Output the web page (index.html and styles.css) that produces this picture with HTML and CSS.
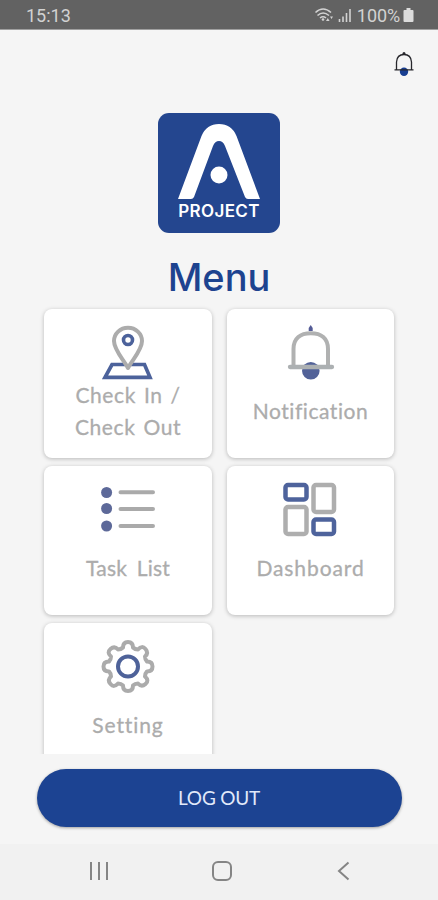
FILE: index.html
```html
<!DOCTYPE html>
<html lang="en">
<head>
<meta charset="utf-8">
<title>Menu</title>
<link rel="stylesheet" href="styles.css">
</head>
<body>
<div class="phone">
  <header class="status">
    <span class="time">15:13</span>
    <svg class="signal" width="38" height="18" viewBox="314 6 38 18">
      <g fill="none" stroke="#d2d2d2" stroke-width="1.6">
        <path d="M315.5 12.5Q323 5.5 331 12.5M317.5 15.5Q323 10.5 329 15.5M320 18Q323 15.5 326 18"/>
        <path d="M339.5 19V22M343 16.500V22M346.500 13V22M350 9V22"/>
      </g>
      <circle cx="323" cy="19.500" r="1.300" fill="#d2d2d2"/>
      <path d="M326 21l1.800-3 1.800 3zM330 16.500h3l-1.500 2.500z" fill="#d2d2d2"/>
    </svg>
    <span class="percent">100%</span>
    <svg width="12" height="16" viewBox="0 0 12 16"><path d="M3.500 1h4v2h2q1 0 1 1v10q0 1-1 1h-8q-1 0-1-1V4q0-1 1-1h2z" fill="#dcdcdc"/></svg>
  </header>
  <main>
    <div class="topbar">
      <svg width="24" height="28" viewBox="392 50 24 28">
        <circle cx="404" cy="71.800" r="4.200" fill="#183e91"/>
        <path d="M396.500 69.500V62Q397 54.500 404 54.500Q411 54.500 411.500 62V69.500M394.500 69.800H413.500" fill="none" stroke="#27272c" stroke-width="1.300"/>
        <circle cx="404" cy="53.500" r="1.500" fill="#27272c"/>
      </svg>
    </div>
    <div class="logo">
      <svg width="84" height="77" viewBox="177 123 84 77">
        <path d="M178 199L201.500 136Q206.500 124 219 124Q231.500 124 236.500 136L260 199H248Q246 199 245 197L225 146Q223 141 219 141Q215 141 213 146L194 197Q193 199 191 199Z" fill="#fff"/>
        <circle cx="219" cy="175" r="8.500" fill="#fff"/>
      </svg>
      <span>PROJECT</span>
    </div>
    <h1>Menu</h1>
    <div class="grid">
      <div class="card">
        <svg width="56" height="57" viewBox="100.500 323 56 57">
          <path d="M112.500 364.500H145L150.500 377.300H105.500Z" fill="none" stroke="#4c629b" stroke-width="3.700"/>
          <path d="M128.500 368C124 359.500 114.500 350 114.500 341A14 13.300 0 0 1 142.500 341C142.500 350 133 359.500 128.500 368Z" fill="#fff" stroke="#acacac" stroke-width="4" stroke-linejoin="round"/>
          <circle cx="128.500" cy="340" r="4.500" fill="none" stroke="#4c629b" stroke-width="3.600"/>
        </svg>
        <p class="checkin">Check In /<br>Check Out</p>
      </div>
      <div class="card">
        <svg width="56" height="57" viewBox="282.500 323 56 57">
          <path d="M308.200 331v-3l2-3 2 3v3z" fill="#535b96"/>
          <circle cx="310.300" cy="370.700" r="8.800" fill="#526298"/>
          <path d="M293 366V349C293 338 300 333.200 310.300 333.200S327.500 338 327.500 349V366" fill="none" stroke="#b0b1b1" stroke-width="4"/>
          <path d="M289.500 367H331.500" stroke="#acb0b2" stroke-width="4.300" stroke-linecap="round"/>
        </svg>
        <p class="notification">Notification</p>
      </div>
      <div class="card">
        <svg width="56" height="57" viewBox="100 480 56 57">
          <g fill="#5d6999"><circle cx="106.600" cy="492.500" r="5.500"/><circle cx="106.600" cy="508.500" r="5.500"/><circle cx="106.600" cy="526" r="5.500"/></g>
          <path d="M120.500 492.300H153M120.500 509H153M120.500 526H153" stroke="#aaa" stroke-width="4" stroke-linecap="round"/>
        </svg>
        <p class="task">Task List</p>
      </div>
      <div class="card">
        <svg width="56" height="57" viewBox="283.500 480 56 57">
          <g fill="none" stroke-width="4.500">
            <rect x="286" y="485" width="21" height="14.500" rx="2.500" stroke="#4e639c"/>
            <rect x="314" y="485" width="20.500" height="27" rx="2.500" stroke="#aeaeae"/>
            <rect x="286" y="507" width="21" height="27" rx="2.500" stroke="#aeaeae"/>
            <rect x="314" y="519.500" width="20.500" height="14.500" rx="2.500" stroke="#4e639c"/>
          </g>
        </svg>
        <p class="dashboard">Dashboard</p>
      </div>
      <div class="card">
        <svg width="56" height="57" viewBox="-28 -29.500 56 57">
          <path fill="none" stroke="#ababab" stroke-width="4" stroke-linejoin="round" d="M-5 -19Q-5 -24.500 0 -24.500T5 -19Q7 -17 10 -17Q14 -21.500 17.500 -17.500T17 -10Q17 -7 19 -5Q24.500 -5 24.500 0T19 5Q17 7 17 10Q21.500 14 17.500 17.500T10 17Q7 17 5 19Q5 24.500 0 24.500T-5 19Q-7 17 -10 17Q-14 21.500 -17.500 17.500T-17 10Q-17 7 -19 5Q-24.500 5 -24.500 0T-19 -5Q-17 -7 -17 -10Q-21.500 -14 -17.500 -17.500T-10 -17Q-7 -17 -5 -19Z"/>
          <circle r="10" fill="none" stroke="#4e6299" stroke-width="4"/>
        </svg>
        <p class="setting">Setting</p>
      </div>
    </div>
    <button class="logout">LOG OUT</button>
  </main>
  <nav class="nav">
    <svg width="20" height="20" viewBox="0 0 20 20"><path d="M2 1V19M10 1V19M18 1V19" stroke="#858585" stroke-width="2"/></svg>
    <svg width="20" height="20" viewBox="0 0 20 20"><rect x="1" y="1" width="18" height="18" rx="5" fill="none" stroke="#858585" stroke-width="2"/></svg>
    <svg width="20" height="20" viewBox="0 0 20 20"><path d="M14.500 1.500L5 10L14.500 18.500" fill="none" stroke="#858585" stroke-width="2"/></svg>
  </nav>
</div>
</body>
</html>
```
FILE: styles.css
```css
* { box-sizing: border-box; }
body { margin: 0; background: #f5f5f5; font-family: Lato, sans-serif; }
svg { display: block; flex: none; }
.phone { width: 438px; height: 900px; display: flex; flex-direction: column; overflow: hidden; }
.status { height: 30px; flex: none; display: flex; align-items: center; padding: 0 23px 0 26px; background: #626262; border-bottom: 1px solid #a0a0a0; color: #d2d2d2; font: 18px Roboto, sans-serif; }
.time { flex: 1; padding-top: 2px; }
.percent { margin: 2px 3px 0 5px; letter-spacing: -0.1px; }
main { flex: 1; min-height: 0; display: flex; flex-direction: column; align-items: center; }
.topbar { width: 100%; height: 83px; flex: none; display: flex; justify-content: flex-end; padding: 20px 22px 0 0; }
.logo { width: 122px; height: 120px; flex: none; border-radius: 11px; background: #24468f; display: flex; flex-direction: column; align-items: center; padding-top: 10px; color: #fff; }
.logo span { font: 600 17px/22px Inter, sans-serif; letter-spacing: 0.35px; }
h1 { margin: 20px 0 0; height: 56px; flex: none; color: #1d438f; font: 500 38px/48px Inter, sans-serif; letter-spacing: 0; }
.grid { width: 366px; height: 449px; flex: none; padding: 4px 8px; margin-top: -4px; overflow: hidden; display: grid; grid-template-columns: 168px 167px; grid-auto-rows: 149px; gap: 8px 15px; }
.card { background: #fff; border-radius: 8px; box-shadow: 0 1px 4px rgba(0, 0, 0, .25); display: flex; flex-direction: column; align-items: center; padding-top: 14px; }
.card p { margin: -1px 0 0; height: 63px; display: flex; align-items: center; text-align: center; color: #acacac; font-size: 21px; line-height: 31.5px; white-space: nowrap; -webkit-text-stroke: .3px #acacac; }
.checkin { letter-spacing: .6px; word-spacing: 2px; }
.notification { letter-spacing: .55px; }
.task { letter-spacing: .2px; word-spacing: 4px; }
.dashboard { letter-spacing: .9px; }
.setting { letter-spacing: .9px; }
.logout { width: 365px; height: 58px; flex: none; margin-top: 15px; padding: 0 0 2px; border: 0; border-radius: 29px; background: #1c4392; color: #e1e9fa; font: 19px Lato, sans-serif; letter-spacing: -.2px; box-shadow: 0 1px 3px rgba(0, 0, 0, .35); }
.nav { height: 56px; flex: none; display: flex; justify-content: space-between; align-items: center; padding: 0 84px 2px 89px; background: #f1f1f1; }
```
